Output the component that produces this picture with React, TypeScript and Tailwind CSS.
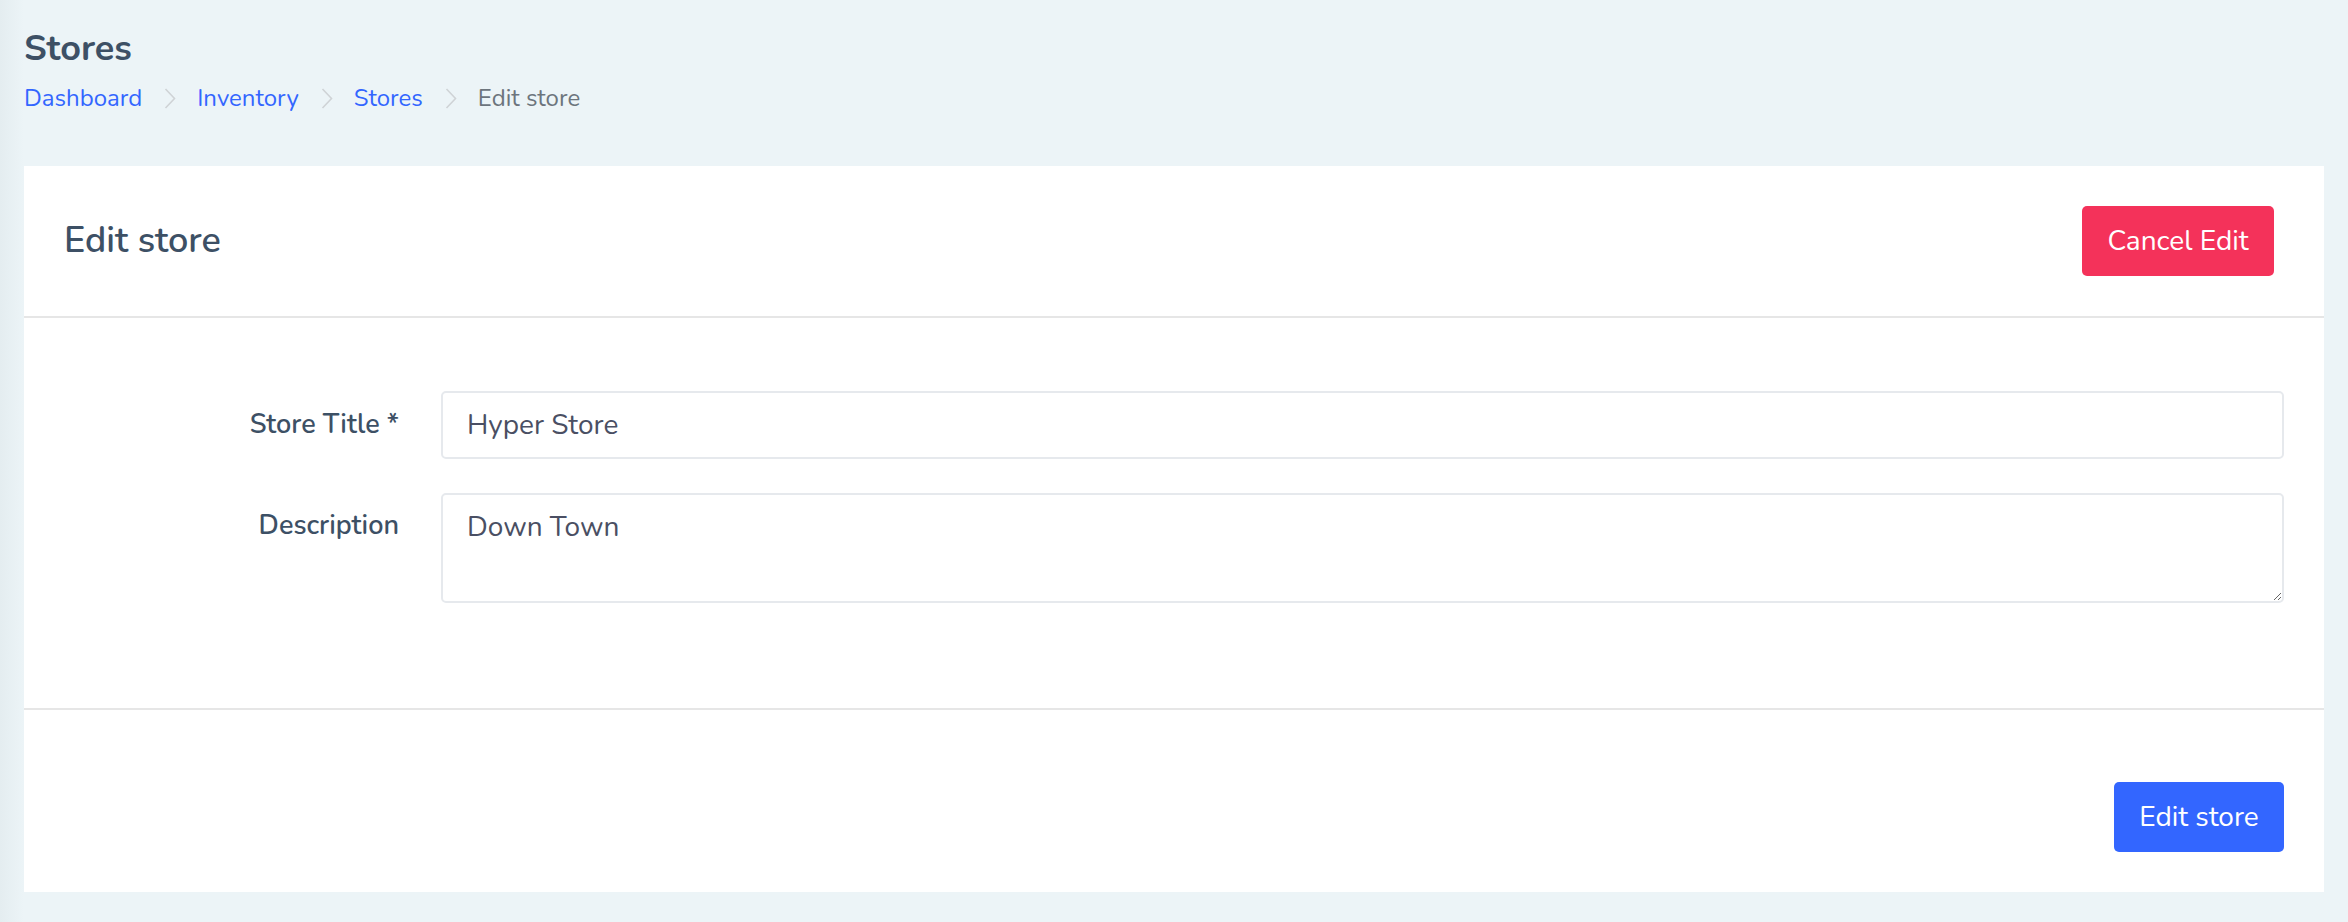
import * as React from 'react';

const FONT = "font-['Nunito','Lato','Noto_Sans',sans-serif]";

const Chevron: React.FC = () => (
  <svg width="12" height="21" viewBox="0 0 12 21" fill="none" className="shrink-0">
    <path d="M1.5 1 L10.5 10.5 L1.5 20" stroke="#cfd3d6" strokeWidth="1.6" />
  </svg>
);

const crumbs = [
  { label: 'Dashboard', href: '#' },
  { label: 'Inventory', href: '#' },
  { label: 'Stores', href: '#' },
];

export default function App() {
  return (
    <div
      className={`min-h-[922px] w-full bg-[linear-gradient(to_right,#e4edf0_0px,#ecf4f7_24px)] px-[24px] pt-[27px] ${FONT}`}
    >
      {/* page header */}
      <h1 className="text-[36px] font-bold leading-[44px] text-[#3d5065]">Stores</h1>
      <nav className="mt-[9px] flex items-center text-[24px] leading-[36px]">
        {crumbs.map((c) => (
          <React.Fragment key={c.label}>
            <a href={c.href} className="text-[#3366ff]">
              {c.label}
            </a>
            <span className="ml-[22px] mr-[21px] flex items-center">
              <Chevron />
            </span>
          </React.Fragment>
        ))}
        <span className="text-[#6c757d]">Edit store</span>
      </nav>

      {/* card */}
      <section className="mt-[50px] bg-white">
        <header className="flex h-[152px] items-center justify-between border-b-2 border-[#e6e6e6] pl-[40px] pr-[50px]">
          <h2 className="text-[36px] font-semibold text-[#3d5065]">Edit store</h2>
          <button className="h-[70px] w-[192px] rounded-[5px] bg-[#f4325a] text-[28px] text-white">
            Cancel Edit
          </button>
        </header>

        <div className="flex flex-col gap-[34px] border-b-2 border-[#e6e6e6] px-[40px] pb-[105px] pt-[73px]">
          <div className="flex items-center gap-[42px]">
            <label className="w-[335px] shrink-0 text-right text-[27px] font-semibold text-[#3d5065]">
              Store Title *
            </label>
            <input
              defaultValue="Hyper Store"
              className="h-[68px] flex-1 rounded-[5px] border-2 border-[#e6e9ed] px-[24px] text-[28px] text-[#4a4f63] outline-none"
            />
          </div>
          <div className="flex items-start gap-[42px]">
            <label className="w-[335px] shrink-0 pt-[13px] text-right text-[27px] font-semibold text-[#3d5065]">
              Description
            </label>
            <textarea
              defaultValue="Down Town"
              className="h-[110px] flex-1 rounded-[5px] border-2 border-[#e6e9ed] px-[24px] pt-[11px] text-[28px] leading-[42px] text-[#4a4f63] outline-none"
            />
          </div>
        </div>

        <footer className="flex justify-end px-[40px] pb-[40px] pt-[72px]">
          <button className="h-[70px] w-[170px] rounded-[5px] bg-[#3366ff] text-[28px] text-white">
            Edit store
          </button>
        </footer>
      </section>
    </div>
  );
}
